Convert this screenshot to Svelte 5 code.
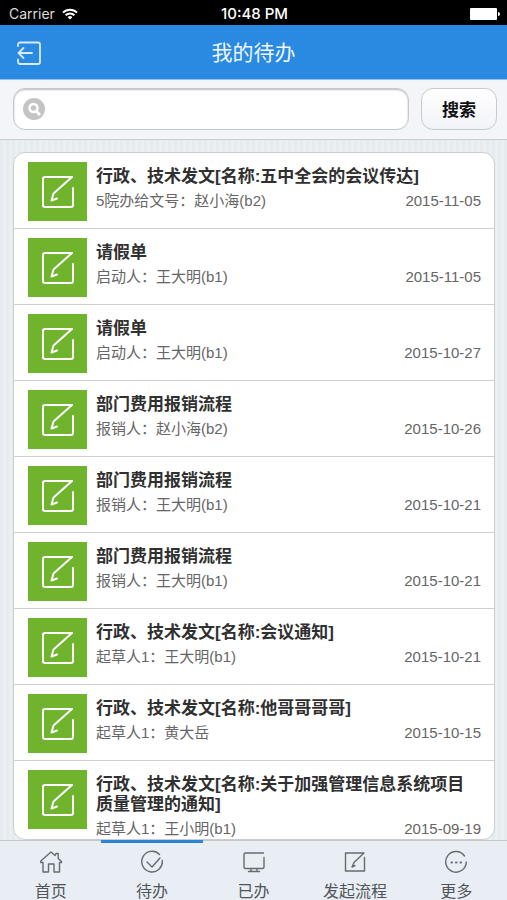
<script lang="ts">
	type Todo = { title: string; label: string; person: string; date: string };

	const todos: Todo[] = [
		{ title: '行政、技术发文[名称:五中全会的会议传达]', label: '5院办给文号', person: '赵小海(b2)', date: '2015-11-05' },
		{ title: '请假单', label: '启动人', person: '王大明(b1)', date: '2015-11-05' },
		{ title: '请假单', label: '启动人', person: '王大明(b1)', date: '2015-10-27' },
		{ title: '部门费用报销流程', label: '报销人', person: '赵小海(b2)', date: '2015-10-26' },
		{ title: '部门费用报销流程', label: '报销人', person: '王大明(b1)', date: '2015-10-21' },
		{ title: '部门费用报销流程', label: '报销人', person: '王大明(b1)', date: '2015-10-21' },
		{ title: '行政、技术发文[名称:会议通知]', label: '起草人1', person: '王大明(b1)', date: '2015-10-21' },
		{ title: '行政、技术发文[名称:他哥哥哥哥]', label: '起草人1', person: '黄大岳', date: '2015-10-15' },
		{
			title: '行政、技术发文[名称:关于加强管理信息系统项目质量管理的通知]',
			label: '起草人1',
			person: '王小明(b1)',
			date: '2015-09-19'
		}
	];

	const tabs = [
		{ id: 'home', text: '首页' },
		{ id: 'todo', text: '待办' },
		{ id: 'done', text: '已办' },
		{ id: 'start', text: '发起流程' },
		{ id: 'more', text: '更多' }
	];

	let active = $state('todo');
	let keyword = $state('');
</script>

<div class="app">
	<div class="status">
		<span class="carrier">
			Carrier
			<svg width="16" height="12" viewBox="0 0 16 12" fill="none" stroke="#fff" stroke-width="2">
				<path d="M1 4.6a10 10 0 0 1 14 0M3.6 7.3a6.2 6.2 0 0 1 8.8 0" />
				<path d="M8 11.6 5.6 9.2a3.4 3.4 0 0 1 4.8 0z" fill="#fff" stroke="none" />
			</svg>
		</span>
		<span class="time">10:48 PM</span>
		<span class="battery">
			<svg width="30" height="12" viewBox="0 0 30 12" fill="#fff">
				<rect width="27" height="12" rx="1" />
				<path d="M28 4a2 2 0 0 1 0 4z" />
			</svg>
		</span>
	</div>

	<header>
		<button class="back" type="button" aria-label="返回">
			<svg width="24" height="24" viewBox="0 0 24 24" fill="none" stroke="#d9ecff" stroke-width="1.8" stroke-linecap="round" stroke-linejoin="round">
				<path d="M1 5V3.5A2 2 0 0 1 3 1.500H21A2 2 0 0 1 23 3.500V21A2 2 0 0 1 21 23H3A2 2 0 0 1 1 21V18.500" />
				<path d="M15 12H1.500M6.500 7l-5 5 5 5" />
			</svg>
		</button>
		<h1>我的待办</h1>
	</header>

	<form class="search" onsubmit={(e) => e.preventDefault()}>
		<div class="field">
			<svg width="22" height="22" viewBox="0 0 22 22">
				<circle cx="11" cy="11" r="11" fill="#c4c4c4" />
				<circle cx="10.500" cy="10" r="4" fill="none" stroke="#fff" stroke-width="2.4" />
				<path d="m13 13 4 4" stroke="#fff" stroke-width="2.8" />
			</svg>
			<input type="text" aria-label="搜索" bind:value={keyword} />
		</div>
		<button type="submit">搜索</button>
	</form>

	<main>
		<ul>
			{#each todos as todo}
				<li>
					<a href="#detail">
						<span class="thumb">
							<svg width="32" height="32" viewBox="0 0 32 32" fill="none" stroke="#fff" stroke-width="2" stroke-linecap="round" stroke-linejoin="round">
								<path d="M31 12V29A2 2 0 0 1 29 31H3A2 2 0 0 1 1 29V3A2 2 0 0 1 3 1H30L11.500 17.500 9.500 24.500 15 22.500" />
							</svg>
						</span>
						<div class="text">
							<h2>{todo.title}</h2>
							<p>
								<span>{todo.label}：{todo.person}</span>
								<time datetime={todo.date}>{todo.date}</time>
							</p>
						</div>
					</a>
				</li>
			{/each}
		</ul>
	</main>

	<nav>
		{#each tabs as tab}
			<a href="#{tab.id}" class:active={active === tab.id} onclick={() => (active = tab.id)}>
				<svg width="24" height="24" viewBox="0 0 24 24" fill="none" stroke="#666b70" stroke-width="1.4" stroke-linecap="round" stroke-linejoin="round">
					{#if tab.id === 'home'}
						<path d="M4 12.500H1.800V11L12 2l4 3.500L17 3.500H19.200V8.500L22.500 11.500V12.500H20.500V22H15V14H9.500V22H4z" />
					{:else if tab.id === 'todo'}
						<path d="M19.500 4.500A10.300 10.300 0 1 0 22.300 10.500" />
						<path d="m7 12 5 5 8-9" />
					{:else if tab.id === 'done'}
						<path d="M22 7.500V17A1.500 1.500 0 0 1 20.500 18.500H3.500A1.500 1.500 0 0 1 2 17V4.500A1.500 1.500 0 0 1 3.500 3H21.500M9 18.500v3M15 18.500v3M6.500 21.500H17.500" />
					{:else if tab.id === 'start'}
						<path d="M21.500 7.500V21H2.500V3H21L11 12.500 9 17 12 15.500" />
					{:else}
						<path d="M20.500 6A10.300 10.300 0 1 0 22.300 12" />
						<path d="M7.500 12.500h.500M12 12.500h.500M16.500 12.500h.500" stroke-width="2" />
					{/if}
				</svg>
				<span>{tab.text}</span>
			</a>
		{/each}
	</nav>
</div>

<style>
	:global(body) {
		margin: 0;
	}
	.app {
		display: flex;
		flex-direction: column;
		height: 100vh;
		color: #303030;
		background: #e8edf1;
		font-family: 'Liberation Sans', 'Noto Sans CJK SC', sans-serif;
	}
	.app * {
		box-sizing: border-box;
	}
	svg {
		display: block;
		flex: none;
	}
	a {
		color: inherit;
		text-decoration: none;
	}

	.status {
		display: grid;
		grid-template-columns: 1fr auto 1fr;
		align-items: center;
		height: 25px;
		padding: 2px 7px 0 9px;
		color: #fff;
		background: #000;
		font: 14px/22px Inter, sans-serif;
	}
	.carrier {
		display: flex;
		align-items: center;
		gap: 7px;
		color: #dcdcdc;
	}
	.time {
		font-size: 15px;
		font-weight: 500;
	}
	.battery {
		justify-self: end;
	}

	header {
		display: grid;
		grid-template-columns: 40px 1fr 40px;
		align-items: center;
		height: 55px;
		padding: 2px 8px 0;
		background: #2a89e0;
		border-bottom: 1px solid #8fc4f3;
	}
	.back {
		display: flex;
		padding: 0 0 0 9px;
		background: none;
		border: 0;
	}
	h1 {
		margin: 0;
		color: #eef7ff;
		font-size: 21px;
		font-weight: 400;
		line-height: 52px;
		text-align: center;
	}

	.search {
		display: flex;
		gap: 12px;
		padding: 8px 10px 9px 13px;
		background: #f3f5f8;
		border-bottom: 1px solid #c9cccf;
	}
	.field {
		display: flex;
		flex: 1;
		align-items: center;
		gap: 8px;
		height: 42px;
		padding: 0 10px 0 9px;
		background: #fff;
		border: 1px solid #c5c7ca;
		border-radius: 12px;
		box-shadow: inset 0 1px 2px #bbb;
	}
	.field input {
		flex: 1;
		min-width: 0;
		padding: 0;
		background: none;
		border: 0;
		outline: 0;
		font: inherit;
	}
	.search button {
		width: 76px;
		height: 42px;
		padding: 3px 0 0;
		color: #111;
		background: linear-gradient(#fff, #f2f3f8);
		border: 1px solid #c8cace;
		border-radius: 12px;
		font: bold 17px/36px 'Liberation Sans', 'Noto Sans CJK SC', sans-serif;
	}

	main {
		flex: 1;
		min-height: 0;
		padding: 12px 12px 0 13px;
		overflow-y: auto;
		scrollbar-width: none;
		background: repeating-linear-gradient(90deg, #e6ebef 0 3px, #eaeff2 3px 6px);
	}
	ul {
		margin: 0;
		padding: 0;
		list-style: none;
		background: #fff;
		border: 1px solid #cbced1;
		border-radius: 12px;
		overflow: hidden;
	}
	li + li {
		border-top: 1px solid #d0d0d0;
	}
	li a {
		display: flex;
		align-items: flex-start;
		gap: 9px;
		min-height: 75px;
		padding: 0 13px 0 14px;
	}
	.thumb {
		display: grid;
		flex: none;
		place-items: center;
		width: 59px;
		height: 59px;
		margin-top: 9px;
		background: #70b32d;
	}
	.text {
		flex: 1;
		min-width: 0;
		padding-top: 14px;
	}
	h2 {
		margin: 0 0 4px;
		font-size: 17px;
		font-weight: 700;
		line-height: 20px;
	}
	p {
		display: flex;
		justify-content: space-between;
		margin: 0;
		color: #666;
		font-size: 15px;
		line-height: 20px;
	}

	nav {
		display: flex;
		height: 60px;
		background: #e9eef5;
		border-top: 1px solid #c3c6c9;
	}
	nav a {
		display: flex;
		flex: 1;
		flex-direction: column;
		align-items: center;
		gap: 9px;
		margin-top: -1px;
		padding-top: 7px;
		color: #50555a;
		border-top: 3px solid transparent;
		font-size: 16px;
		line-height: 18px;
	}
	nav a.active {
		border-top-color: #2a83d3;
	}
</style>
